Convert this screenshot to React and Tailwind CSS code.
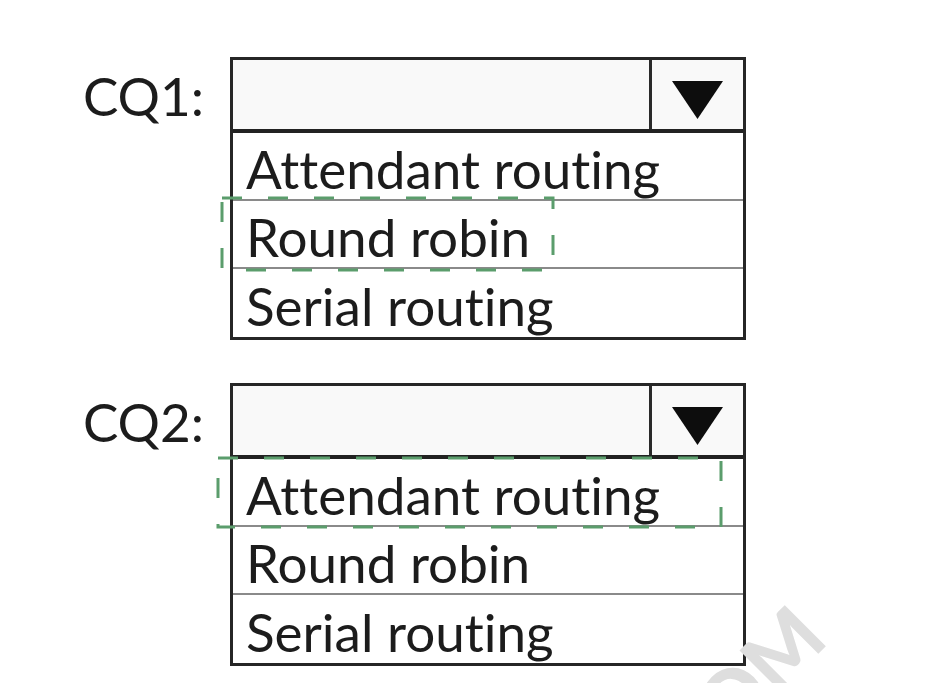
import React from 'react';

const OPTIONS = ['Attendant routing', 'Round robin', 'Serial routing'];

// dashed green highlight drawn over the chosen answer
const Highlight = ({ left, top, width, height }) => (
  <svg
    className="absolute pointer-events-none"
    style={{ left, top }}
    width={width + 4}
    height={height + 4}
  >
    <rect
      x="2"
      y="2"
      width={width}
      height={height}
      fill="none"
      stroke="#5b9d6c"
      strokeWidth="3"
      strokeDasharray="20 26"
    />
  </svg>
);

const Dropdown = ({ label, highlight }) => (
  <div className="relative flex items-start">
    <div className="w-[230px] h-[76px] flex items-center justify-end pr-[26px] text-[53px] text-[#1c1c1c] leading-none">
      {label}
    </div>
    <div className="w-[516px] border-[3px] border-[#262626] bg-white">
      {/* select bar */}
      <div className="h-[73px] flex border-b-[4px] border-[#222] bg-[#f9f9f9]">
        <div className="flex-1" />
        <div className="w-[94px] border-l-[3px] border-[#2a2a2a] flex items-center justify-center pt-[10px]">
          <svg width="51" height="38" viewBox="0 0 51 38">
            <polygon points="0,0 51,0 25.5,38" fill="#0d0d0d" />
          </svg>
        </div>
      </div>
      {/* option list */}
      {OPTIONS.map((opt, i) => (
        <div
          key={opt}
          className={
            'h-[68px] flex items-center pl-[13px] pt-[4px] text-[53px] leading-none text-[#1c1c1c] ' +
            (i < OPTIONS.length - 1 ? 'border-b-[2px] border-[#8a8a8a]' : '')
          }
        >
          {opt}
        </div>
      ))}
    </div>
    {highlight && <Highlight {...highlight} />}
  </div>
);

export default function App() {
  return (
    <div
      className="relative w-[950px] h-[683px] bg-white overflow-hidden"
      style={{ fontFamily: 'Lato, "Open Sans", sans-serif', fontVariantLigatures: 'none' }}
    >
      <div className="flex flex-col gap-[43px] pt-[57px]">
        <Dropdown label="CQ1:" highlight={{ left: 220, top: 139, width: 331, height: 72 }} />
        <Dropdown label="CQ2:" highlight={{ left: 216, top: 73, width: 503, height: 69 }} />
      </div>
      {/* faint watermark */}
      <div className="absolute left-[740px] top-[688px] -translate-x-1/2 -translate-y-1/2 -rotate-45 text-[80px] font-black text-[#dedede] leading-none select-none">
        COM
      </div>
    </div>
  );
}
